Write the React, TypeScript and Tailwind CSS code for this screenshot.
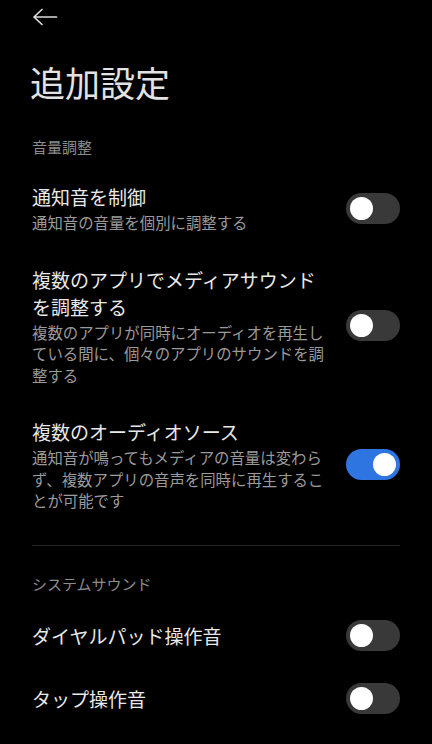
import { useState } from 'react';

interface SettingRow {
  id: string;
  title: string;
  description?: string;
  enabled: boolean;
}

const volumeRows: SettingRow[] = [
  {
    id: 'notify',
    title: '通知音を制御',
    description: '通知音の音量を個別に調整する',
    enabled: false,
  },
  {
    id: 'multi-media',
    title: '複数のアプリでメディアサウンドを調整する',
    description: '複数のアプリが同時にオーディオを再生している間に、個々のアプリのサウンドを調整する',
    enabled: false,
  },
  {
    id: 'multi-source',
    title: '複数のオーディオソース',
    description: '通知音が鳴ってもメディアの音量は変わらず、複数アプリの音声を同時に再生することが可能です',
    enabled: true,
  },
];

const systemRows: SettingRow[] = [
  { id: 'dialpad', title: 'ダイヤルパッド操作音', enabled: false },
  { id: 'tap', title: 'タップ操作音', enabled: false },
];

function Toggle({ on, onClick }: { on: boolean; onClick: () => void }) {
  return (
    <button
      onClick={onClick}
      className={`shrink-0 w-[54px] h-[31px] rounded-full flex items-center px-[4px] ${
        on ? 'bg-[#2f75e2] justify-end' : 'bg-[#393939] justify-start'
      }`}
    >
      <span className="block w-[23px] h-[23px] rounded-full bg-white" />
    </button>
  );
}

export default function App() {
  const [state, setState] = useState<Record<string, boolean>>(() => {
    const s: Record<string, boolean> = {};
    [...volumeRows, ...systemRows].forEach((r) => (s[r.id] = r.enabled));
    return s;
  });

  const flip = (id: string) => setState((s) => ({ ...s, [id]: !s[id] }));

  return (
    <div
      className="min-h-[744px] w-[432px] bg-black text-[#e4e4e4] overflow-hidden"
      style={{ fontFamily: '"Noto Sans CJK JP", "Noto Sans", sans-serif' }}
    >
      <div className="h-[34px] px-[32px] flex items-center">
        <svg width="26" height="18" viewBox="0 0 26 18" fill="none" stroke="#dcdcdc" strokeWidth="1.7" strokeLinecap="round" strokeLinejoin="round">
          <path d="M24.5 9H2M10 1.5L2 9l8 7.5" />
        </svg>
      </div>

      <h1 className="mt-[26px] px-[30px] text-[35px] leading-[44px] font-normal text-[#e2e2e2]">追加設定</h1>

      <div className="mt-[33px] px-[32px] text-[15px] leading-[20px] text-[#8c8c8c]">音量調整</div>

      <div className="mt-[10px]">
        {volumeRows.map((row) => (
          <div key={row.id} className="flex items-center gap-[20px] px-[32px] py-[16px]">
            <div className="flex-1 min-w-0">
              <div className="text-[19px] leading-[27px] text-[#e8e8e8]">{row.title}</div>
              <div className="mt-[2px] text-[15.4px] leading-[21.5px] text-[#9a9a9a]">{row.description}</div>
            </div>
            <Toggle on={state[row.id]} onClick={() => flip(row.id)} />
          </div>
        ))}
      </div>

      <div className="mx-[32px] mt-[17px] h-px bg-[#232323]" />

      <div className="mt-[28px] px-[32px] text-[15px] leading-[20px] text-[#8c8c8c]">システムサウンド</div>

      <div className="mt-[10px]">
        {systemRows.map((row) => (
          <div key={row.id} className="flex items-center gap-[20px] px-[32px] h-[63px]">
            <div className="flex-1 text-[19px] leading-[27px] text-[#e8e8e8]">{row.title}</div>
            <Toggle on={state[row.id]} onClick={() => flip(row.id)} />
          </div>
        ))}
      </div>
    </div>
  );
}
